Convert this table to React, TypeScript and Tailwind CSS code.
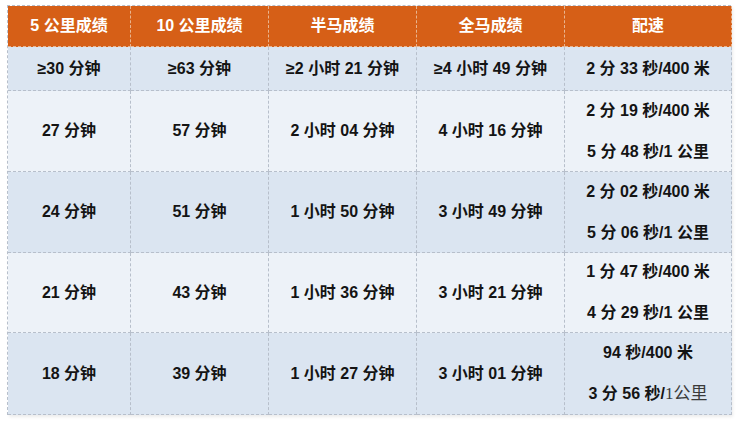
import React from 'react';

type Row = { cells: string[]; pace: React.ReactNode[]; alt: boolean };

const headers = ['5 公里成绩', '10 公里成绩', '半马成绩', '全马成绩', '配速'];

const rows: Row[] = [
    { cells: ['≥30 分钟', '≥63 分钟', '≥2 小时 21 分钟', '≥4 小时 49 分钟'], pace: ['2 分 33 秒/400 米'], alt: true },
    { cells: ['27 分钟', '57 分钟', '2 小时 04 分钟', '4 小时 16 分钟'], pace: ['2 分 19 秒/400 米', '5 分 48 秒/1 公里'], alt: false },
    { cells: ['24 分钟', '51 分钟', '1 小时 50 分钟', '3 小时 49 分钟'], pace: ['2 分 02 秒/400 米', '5 分 06 秒/1 公里'], alt: true },
    { cells: ['21 分钟', '43 分钟', '1 小时 36 分钟', '3 小时 21 分钟'], pace: ['1 分 47 秒/400 米', '4 分 29 秒/1 公里'], alt: false },
    {
        cells: ['18 分钟', '39 分钟', '1 小时 27 分钟', '3 小时 01 分钟'],
        pace: [
            '94 秒/400 米',
            <>3 分 56 秒/<span className="font-normal text-[17px] text-[#3a3a3a] font-['Liberation_Serif','Noto_Sans_CJK_SC',serif]">1公里</span></>,
        ],
        alt: true,
    },
];

const rowHeights = ['h-[44px]', 'h-[81px]', 'h-[81px]', 'h-[80px]', 'h-[82px]'];

export default function App() {
    return (
        <div className="w-[738px] h-[421px] bg-white pl-[7px] pt-[5px] font-['Liberation_Sans','Noto_Sans_CJK_SC',sans-serif]">
            <div className="w-[724px] grid grid-cols-[123px_138px_148px_148px_167px] border-l border-t border-dashed border-[#b7bfcb] shadow-[2px_2px_3px_rgba(0,0,0,0.08)]">
                {headers.map((h) => (
                    <div
                        key={h}
                        className="h-[41px] bg-[#d65f17] border-r border-b border-dashed border-[#e9b48f] flex items-center justify-center text-white font-bold text-[16px]"
                    >
                        {h}
                    </div>
                ))}
                {rows.map((r, i) => (
                    <React.Fragment key={i}>
                        {r.cells.map((c, j) => (
                            <div
                                key={j}
                                className={`${rowHeights[i]} ${r.alt ? 'bg-[#dbe5f1]' : 'bg-[#edf2f8]'} border-r border-b border-dashed border-[#b7bfcb] flex items-center justify-center text-[#141414] font-bold text-[16px]`}
                            >
                                {c}
                            </div>
                        ))}
                        <div
                            className={`${rowHeights[i]} ${r.alt ? 'bg-[#dbe5f1]' : 'bg-[#edf2f8]'} border-r border-b border-dashed border-[#b7bfcb] flex flex-col items-center justify-center gap-[19px] text-[#141414] font-bold text-[16px] leading-[22px]`}
                        >
                            {r.pace.map((p, k) => (
                                <div key={k}>{p}</div>
                            ))}
                        </div>
                    </React.Fragment>
                ))}
            </div>
        </div>
    );
}
